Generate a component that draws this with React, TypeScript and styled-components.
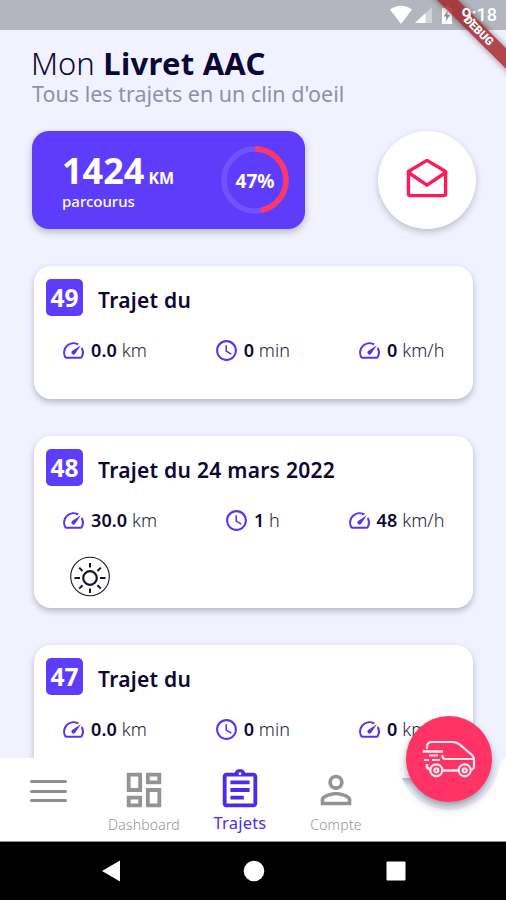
import React from 'react';
import styled, { createGlobalStyle } from 'styled-components';
import {
  MdOutlineSpeed,
  MdAccessTime,
  MdOutlineDashboard,
  MdOutlineAssignment,
  MdPersonOutline,
} from 'react-icons/md';

const INDIGO = '#5d3dfb';
const NAVY = '#0d0733';
const ROSE = '#ff3366';

const GlobalStyle = createGlobalStyle`
  * { box-sizing: border-box; }
  body { margin: 0; font-family: 'Noto Sans', 'Open Sans', sans-serif; color: ${NAVY}; }
  svg { display: block; }
`;

const Phone = styled.div`
  position: relative;
  width: 506px;
  height: 900px;
  overflow: hidden;
  display: flex;
  flex-direction: column;
  background: #f0f3ff;
`;

const StatusBar = styled.div`
  flex: none;
  height: 30px;
  background: #b3b6be;
  display: flex;
  justify-content: flex-end;
  align-items: center;
  padding-right: 9px;
`;

const Clock = styled.span`
  position: relative;
  z-index: 2;
  margin-left: 8px;
  font: 500 18px/30px Roboto, sans-serif;
  color: #fff;
`;

const RibbonCorner = styled.div`
  position: absolute;
  z-index: 1;
  top: 0;
  right: 0;
  width: 90px;
  height: 90px;
  overflow: hidden;
`;

const Ribbon = styled.div`
  position: absolute;
  top: 21.5px;
  left: -9px;
  width: 140px;
  height: 15px;
  transform: rotate(45deg);
  background: rgba(164, 32, 36, 0.82);
  box-shadow: 0 0 6px rgba(0, 0, 0, 0.45);
  color: #fff;
  font: 900 11.5px/15px Roboto, sans-serif;
  text-align: center;
  padding-left: 4px;
`;

const Screen = styled.main`
  position: relative;
  flex: none;
  height: 812px;
  overflow: hidden;
  padding: 0 33px 0 34px;
`;

const Heading = styled.h1`
  margin: 13px 0 0 -3px;
  height: 40px;
  font-size: 31px;
  line-height: 41px;
  font-weight: 300;
  white-space: nowrap;
  strong { font-weight: 700; letter-spacing: 0.25px; margin-left: 0.5px; }
`;

const Subtitle = styled.p`
  margin: 0 0 0 -2px;
  height: 48px;
  font-size: 21.5px;
  line-height: 22px;
  color: #8f90a6;
  white-space: nowrap;
`;

const Summary = styled.section`
  display: flex;
  justify-content: space-between;
  margin: 0 -3px 0 -2px;
  height: 98px;
`;

const DistanceCard = styled.div`
  width: 273px;
  height: 98px;
  border-radius: 17px;
  background: ${INDIGO};
  color: #fff;
  box-shadow: 0 3px 7px rgba(0, 0, 0, 0.25);
  display: flex;
  align-items: center;
  justify-content: space-between;
  padding: 0 15px 0 30px;
`;

const Distance = styled.div`
  font-weight: 700;
  font-size: 36px;
  line-height: 36px;
  white-space: nowrap;
  padding-top: 6px;
  small { font-size: 16px; font-weight: 700; margin-left: 4px; }
`;

const DistanceLabel = styled.div`
  font-size: 15px;
  line-height: 17px;
  font-weight: 500;
  margin-top: -3px;
  padding-bottom: 3px;
`;

const Progress = styled.div`
  display: grid;
  width: 70px;
  height: 70px;
  > * { grid-area: 1 / 1; }
`;

const Percent = styled.span`
  place-self: center;
  font-size: 19px;
  line-height: 24px;
  font-weight: 700;
  padding-top: 1px;
`;

const MailButton = styled.button`
  width: 98px;
  height: 98px;
  border: 0;
  padding: 0 0 3px 0;
  border-radius: 50%;
  background: #fff;
  display: grid;
  place-items: center;
  box-shadow: 0 3px 7px rgba(0, 0, 0, 0.22);
`;

const TripList = styled.section`
  display: flex;
  flex-direction: column;
  gap: 37px;
  margin-top: 37px;
`;

const TripCard = styled.article<{ $tall?: boolean }>`
  flex: none;
  height: ${(p) => (p.$tall ? 172 : 133)}px;
  border-radius: 17px;
  background: #fff;
  box-shadow: 0 3px 6px rgba(0, 0, 0, 0.25);
  padding: 13px 25px 0 12px;
`;

const TripHeader = styled.header`
  display: flex;
  height: 37px;
`;

const TripNumber = styled.div`
  width: 37px;
  height: 37px;
  border-radius: 5px;
  background: ${INDIGO};
  color: #fff;
  font-size: 24.5px;
  line-height: 37px;
  font-weight: 700;
  text-align: center;
`;

const TripTitle = styled.h2`
  margin: 0 0 0 15px;
  font-size: 21px;
  line-height: 43px;
  font-weight: 600;
  letter-spacing: 0.28px;
  white-space: nowrap;
`;

const Stats = styled.div`
  display: flex;
  justify-content: space-between;
  align-items: center;
  height: 24px;
  margin: 22px 3.5px 0 15px;
`;

const Stat = styled.div`
  display: flex;
  align-items: center;
  gap: 5px;
  font-size: 18px;
  line-height: 24px;
  font-weight: 300;
  white-space: nowrap;
  color: #252040;
  svg { color: #5436ee; }
  b { font-weight: 600; color: ${NAVY}; }
  span { letter-spacing: 0.1px; }
`;

const Weather = styled.div`
  margin: 23.5px 0 0 24px;
`;

const BottomBar = styled.nav`
  position: absolute;
  left: 0;
  top: 758px;
  width: 506px;
  height: 84px;
  background: #fff;
  clip-path: path('M0 0H383Q397 0 399 11A51 51 0 0 0 499 11Q501 0 506 0V84H0Z');
  border-bottom: 1px solid #8c8c8c;
  display: flex;
`;

const Tab = styled.div<{ $active?: boolean }>`
  width: 96px;
  display: flex;
  flex-direction: column;
  align-items: center;
  padding-top: 9px;
  color: ${(p) => (p.$active ? '#4c2ceb' : '#949494')};
  font-size: ${(p) => (p.$active ? 16.5 : 14)}px;
  line-height: 20px;
  font-weight: ${(p) => (p.$active ? 400 : 300)};
  letter-spacing: 0.2px;
  span { margin-top: ${(p) => (p.$active ? 0 : 2)}px; }
`;

const MenuTab = styled.div`
  width: 96px;
  padding: 22px 0 0 30px;
  display: flex;
  flex-direction: column;
  gap: 6.5px;
`;

const MenuLine = styled.i`
  width: 37px;
  height: 3px;
  border-radius: 2px;
  background: #8f8f8f;
`;

const Fab = styled.button`
  position: absolute;
  left: 406px;
  top: 716px;
  width: 86px;
  height: 86px;
  border: 0;
  padding: 0;
  border-radius: 50%;
  background: ${ROSE};
  display: grid;
  place-items: center;
  box-shadow: 0 6px 10px rgba(0, 0, 0, 0.25), 0 2px 4px rgba(0, 0, 0, 0.15);
`;

const SystemBar = styled.div`
  flex: none;
  height: 58px;
  background: #000;
  display: flex;
  justify-content: space-between;
  align-items: center;
  padding: 0 100px 0 101px;
`;

type Trip = {
  id: number;
  title: string;
  km: string;
  time: string;
  unit: string;
  speed: string;
  sunny?: boolean;
};

const trips: Trip[] = [
  { id: 49, title: 'Trajet du', km: '0.0', time: '0', unit: 'min', speed: '0' },
  { id: 48, title: 'Trajet du 24 mars 2022', km: '30.0', time: '1', unit: 'h', speed: '48', sunny: true },
  { id: 47, title: 'Trajet du', km: '0.0', time: '0', unit: 'min', speed: '0' },
];

const StatusIcons = () => (
  <svg width="66" height="20" viewBox="0 0 66 20" fill="#fff">
    <path d="M2 4.5Q13 -3 24 4.5L13 19Z" />
    <path d="M44 2V18H27Z" opacity=".4" />
    <path d="M37.5 8V18H27Z" />
    <path d="M54 3h3V1h4v2h3v16H54Z" />
    <path d="M59.8 5.5l-4 6h2.6l-.7 5 4.2-6.4h-2.7Z" fill="#8d9098" />
  </svg>
);

const ProgressRing = () => (
  <svg width="70" height="70" viewBox="0 0 70 70" fill="none" strokeWidth="5.5">
    <circle cx="35" cy="35" r="31" stroke="#7052ff" />
    <circle
      cx="35"
      cy="35"
      r="31"
      stroke="#ff3768"
      pathLength={100}
      strokeDasharray="47 53"
      transform="rotate(-90 35 35)"
    />
  </svg>
);

const OpenMail = () => (
  <svg width="42" height="42" viewBox="0 0 42 42" fill="none" stroke="#fa1d5c" strokeWidth="3.4" strokeLinejoin="round">
    <path d="M21 2.4 39.6 13.5V35.7Q39.6 37.6 37.7 37.6H4.3Q2.4 37.6 2.4 35.7V13.5Z" />
    <path d="M2.4 14.5 21 27.2 39.6 14.5" strokeLinejoin="miter" />
  </svg>
);

const Sun = () => (
  <svg width="40" height="42" viewBox="0 0 40 42" fill="none" stroke="#15122b">
    <circle cx="20" cy="20.5" r="19.3" strokeWidth="1.1" />
    <circle cx="20" cy="22" r="6.8" strokeWidth="2.2" />
    <path
      strokeWidth="2"
      d="M20 7v4.5M20 32.5V37M4.5 22H10M30 22h5.5M9.2 11.6l3.3 3.4M30.8 11.6 27.5 15M9.2 32.6l3.3-3.4M30.8 32.6l-3.3-3.4"
    />
  </svg>
);

const FastCar = () => (
  <svg width="54" height="40" viewBox="0 0 54 40" fill="none" stroke="#ffe9ef" strokeWidth="2.2">
    <path d="M5 10V7.5Q5 3 10 3H30Q34 3 37 5L50 16Q52 18 52 21V28.5L49.5 31" />
    <path d="M20.5 16V17Q20.5 20 23.5 20H51.5" />
    <path d="M.8 12.5H21" strokeWidth="2.6" />
    <path d="M7 16.5H16M2 21h5M10 21h8" />
    <path d="M5 25V28.5L8.5 31M20.5 31.5H36.5" strokeWidth="2.6" />
    <circle cx="14.3" cy="31.3" r="6" />
    <circle cx="14.3" cy="31.3" r="2" />
    <circle cx="42.7" cy="31.3" r="6" />
    <circle cx="42.7" cy="31.3" r="2" />
  </svg>
);

const BackGlyph = () => (
  <svg width="20" height="22" viewBox="0 0 20 22" fill="#fff"><path d="M1 11 19 .5v21Z" /></svg>
);
const HomeGlyph = () => (
  <svg width="22" height="22" viewBox="0 0 22 22" fill="#fff"><circle cx="11" cy="11" r="10.3" /></svg>
);
const RecentsGlyph = () => (
  <svg width="20" height="20" viewBox="0 0 20 20" fill="#fff"><rect x=".5" y=".5" width="19" height="19" rx="1" /></svg>
);

export default function App() {
  return (
    <Phone>
      <GlobalStyle />
      <StatusBar>
        <StatusIcons />
        <Clock>9:18</Clock>
      </StatusBar>

      <Screen>
        <Heading>Mon <strong>Livret AAC</strong></Heading>
        <Subtitle>Tous les trajets en un clin d'oeil</Subtitle>

        <Summary>
          <DistanceCard>
            <div>
              <Distance>1424<small>KM</small></Distance>
              <DistanceLabel>parcourus</DistanceLabel>
            </div>
            <Progress>
              <ProgressRing />
              <Percent>47%</Percent>
            </Progress>
          </DistanceCard>
          <MailButton aria-label="Messages"><OpenMail /></MailButton>
        </Summary>

        <TripList>
          {trips.map((t) => (
            <TripCard key={t.id} $tall={t.sunny}>
              <TripHeader>
                <TripNumber>{t.id}</TripNumber>
                <TripTitle>{t.title}</TripTitle>
              </TripHeader>
              <Stats>
                <Stat><MdOutlineSpeed size={25} /><span><b>{t.km}</b> km</span></Stat>
                <Stat><MdAccessTime size={25} /><span><b>{t.time}</b> {t.unit}</span></Stat>
                <Stat><MdOutlineSpeed size={25} /><span><b>{t.speed}</b> km/h</span></Stat>
              </Stats>
              {t.sunny && <Weather><Sun /></Weather>}
            </TripCard>
          ))}
        </TripList>
      </Screen>

      <BottomBar>
        <MenuTab><MenuLine /><MenuLine /><MenuLine /></MenuTab>
        <Tab><MdOutlineDashboard size={46} /><span>Dashboard</span></Tab>
        <Tab $active><MdOutlineAssignment size={46} /><span>Trajets</span></Tab>
        <Tab><MdPersonOutline size={46} /><span>Compte</span></Tab>
      </BottomBar>
      <Fab aria-label="Nouveau trajet"><FastCar /></Fab>

      <SystemBar><BackGlyph /><HomeGlyph /><RecentsGlyph /></SystemBar>

      <RibbonCorner><Ribbon>DEBUG</Ribbon></RibbonCorner>
    </Phone>
  );
}
